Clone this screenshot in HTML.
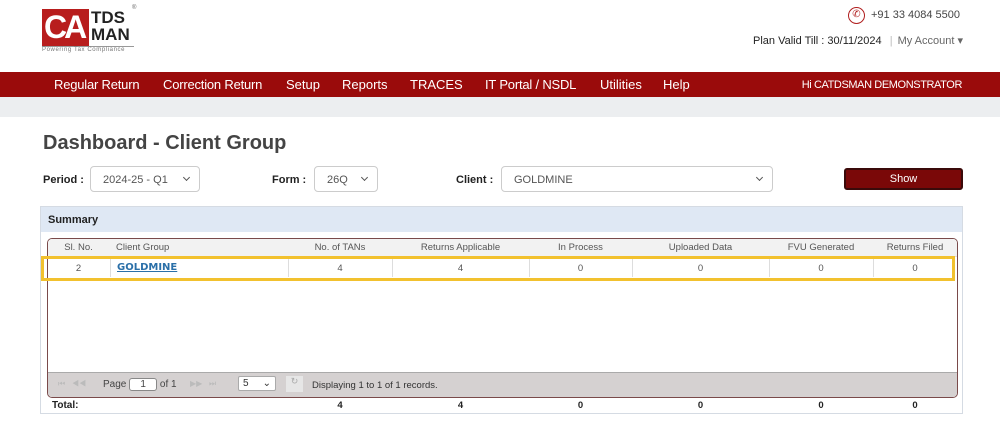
<!DOCTYPE html>
<html><head><style>
*{box-sizing:border-box;margin:0;padding:0}
body{width:1000px;height:440px;background:#fff;font-family:"Liberation Sans",Arial,sans-serif;position:relative;overflow:hidden;color:#333}
.a{position:absolute}
.nav{top:72px;left:0;width:1000px;height:25px;background:#9a0b0b;color:#fff;font-size:13px}
.nav span{position:absolute;top:5px}
.sel{border:1px solid #ccc;border-radius:4px;height:26px;font-size:11px;color:#555;padding:7px 12px}
.sel:after{content:"";position:absolute;right:10px;top:8px;width:4px;height:4px;border-right:1.5px solid #555;border-bottom:1.5px solid #555;transform:rotate(45deg)}
.lbl{font-size:11px;font-weight:bold;color:#222}
.c{position:absolute;text-align:center;font-size:9.5px;color:#555}
.d{position:absolute;top:0;height:18px;border-left:1px solid #ddd}
</style></head><body>
<div class="a" style="left:42px;top:9px;width:47px;height:37px;background:#b81d1d;color:#fff;font-size:32px;font-weight:bold;line-height:37px;letter-spacing:-3px;padding-left:2px">CA</div>
<div class="a" style="left:91px;top:9px;font-size:17px;font-weight:bold;color:#222;line-height:17px">TDS<br>MAN</div>
<div class="a" style="left:132px;top:5px;font-size:6px;color:#666">®</div>
<div class="a" style="left:42px;top:46px;width:92px;height:1px;background:#999"></div>
<div class="a" style="left:42px;top:47px;font-size:6px;color:#777;letter-spacing:.6px">Powering Tax Compliance</div>
<div class="a" style="left:848px;top:7px;width:17px;height:17px;border:1.5px solid #b01e1e;border-radius:50%;color:#b01e1e;font-size:10px;text-align:center;line-height:14px">✆</div>
<div class="a" style="left:871px;top:9px;font-size:11px;color:#444">+91 33 4084 5500</div>
<div class="a" style="right:37px;top:34px;font-size:11px;color:#222">Plan Valid Till : 30/11/2024 <span style="color:#bbb;margin:0 5px">|</span><span style="color:#666">My Account ▾</span></div>
<div class="a nav">
<span style="left:54px;letter-spacing:-.2px">Regular Return</span><span style="left:163px;letter-spacing:-.2px">Correction Return</span><span style="left:286px">Setup</span><span style="left:342px">Reports</span><span style="left:410px">TRACES</span><span style="left:485px;letter-spacing:-.2px">IT Portal / NSDL</span><span style="left:600px">Utilities</span><span style="left:663px">Help</span><span style="right:38px;font-size:11px;top:7px;letter-spacing:-.4px">Hi CATDSMAN DEMONSTRATOR</span>
</div>
<div class="a" style="top:97px;left:0;width:1000px;height:20px;background:#eceef0"></div>
<div class="a" style="left:43px;top:132px;font-size:20px;font-weight:bold;color:#444">Dashboard - Client Group</div>
<div class="a lbl" style="left:43px;top:174px">Period :</div>
<div class="a sel" style="left:90px;top:166px;width:110px">2024-25 - Q1</div>
<div class="a lbl" style="left:272px;top:174px">Form :</div>
<div class="a sel" style="left:314px;top:166px;width:64px">26Q</div>
<div class="a lbl" style="left:456px;top:174px">Client :</div>
<div class="a sel" style="left:501px;top:166px;width:272px">GOLDMINE</div>
<div class="a" style="left:844px;top:168px;width:119px;height:22px;background:#7a0808;border:2px solid #3a0a0a;border-radius:3px;color:#fff;font-size:11px;text-align:center;line-height:18px">Show</div>
<div class="a" style="left:40px;top:206px;width:923px;height:208px;border:1px solid #d5dbe3"></div>
<div class="a" style="left:41px;top:207px;width:921px;height:25px;background:#dfe8f4;font-size:11px;font-weight:bold;color:#222;padding:7px 7px">Summary</div>
<div class="a" style="left:47px;top:238px;width:911px;height:160px;border:1px solid #7a4a4a;border-radius:5px;overflow:hidden">
 <div class="a" style="left:0;top:0;width:911px;height:18px;background:#f2f2f2;border-bottom:1px solid #ddd"></div>
 <div class="a" style="left:0;top:133px;width:911px;height:26px;background:#d5d1d1;border-top:1px solid #aaa"></div>
</div>
<div class="a" style="left:47px;top:242px;width:911px">
 <div class="c" style="left:0;width:63px">Sl. No.</div><div class="c" style="left:69px;text-align:left">Client Group</div><div class="c" style="left:241px;width:104px">No. of TANs</div><div class="c" style="left:345px;width:137px">Returns Applicable</div><div class="c" style="left:482px;width:103px">In Process</div><div class="c" style="left:585px;width:137px">Uploaded Data</div><div class="c" style="left:722px;width:104px">FVU Generated</div><div class="c" style="left:826px;width:84px">Returns Filed</div>
</div>
<div class="a" style="left:47px;top:259px;width:911px;height:18px">
 <div class="d" style="left:63px"></div><div class="d" style="left:241px"></div><div class="d" style="left:345px"></div><div class="d" style="left:482px"></div><div class="d" style="left:585px"></div><div class="d" style="left:722px"></div><div class="d" style="left:826px"></div>
 <div class="c" style="left:0;width:63px;top:4px">2</div>
 <div class="a" style="left:70px;top:3px;font-size:10px;font-weight:bold;color:#2a6fa8;text-decoration:underline;font-family:'DejaVu Sans',sans-serif">GOLDMINE</div>
 <div class="c" style="left:241px;width:104px;top:4px">4</div><div class="c" style="left:345px;width:137px;top:4px">4</div><div class="c" style="left:482px;width:103px;top:4px">0</div><div class="c" style="left:585px;width:137px;top:4px">0</div><div class="c" style="left:722px;width:104px;top:4px">0</div><div class="c" style="left:826px;width:84px;top:4px">0</div>
</div>
<div class="a" style="left:41px;top:256px;width:914px;height:25px;border:3px solid #f2c12e"></div>
<div class="a" style="left:58px;top:379px;font-size:8px;color:#bbb">⏮ &nbsp; ◀◀</div>
<div class="a" style="left:103px;top:378px;font-size:10px;color:#444">Page <span style="display:inline-block;width:28px;height:13px;border:1px solid #888;border-radius:3px;background:#fff;text-align:center">1</span> of 1</div>
<div class="a" style="left:190px;top:379px;font-size:8px;color:#bbb">▶▶ &nbsp; ⏭</div>
<div class="a" style="left:238px;top:376px;width:38px;height:15px;background:#fff;border:1px solid #aaa;border-radius:2px;font-size:10px;padding:1px 4px">5 <span style="float:right">⌄</span></div>
<div class="a" style="left:286px;top:376px;width:17px;height:16px;background:#e6e6e6;font-size:9px;color:#aaa;text-align:center">↻</div>
<div class="a" style="left:312px;top:380px;font-size:9.5px;color:#333">Displaying 1 to 1 of 1 records.</div>
<div class="a" style="left:47px;top:400px;width:911px;font-weight:bold;font-size:10px;color:#222">
 <div class="a" style="left:5px">Total:</div>
 <div class="c" style="left:241px;width:104px;color:#222">4</div><div class="c" style="left:345px;width:137px;color:#222">4</div><div class="c" style="left:482px;width:103px;color:#222">0</div><div class="c" style="left:585px;width:137px;color:#222">0</div><div class="c" style="left:722px;width:104px;color:#222">0</div><div class="c" style="left:826px;width:84px;color:#222">0</div>
</div>
</body></html>
